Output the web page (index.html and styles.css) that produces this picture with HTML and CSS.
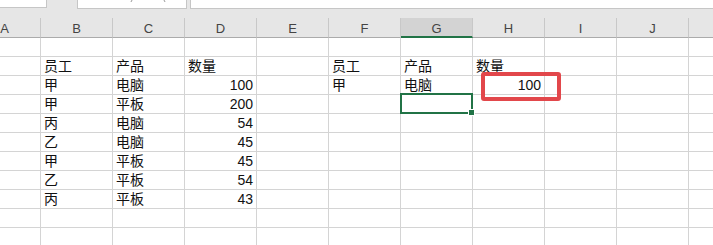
FILE: index.html
```html
<!DOCTYPE html>
<html lang="zh-CN">
<head>
    <meta charset="UTF-8">
    <title>工作表</title>
    <link rel="stylesheet" href="styles.css">
</head>
<body>
    <div class="toolbar">
        <div class="box name-box"></div>
        <div class="box btn-box"><span class="tick cancel"></span><span class="tick enter"></span></div>
        <div class="box formula-box"></div>
    </div>

    <div class="sheet">
        <div class="hd">A</div><div class="hd">B</div><div class="hd">C</div><div class="hd">D</div><div class="hd">E</div><div class="hd">F</div><div class="hd active">G</div><div class="hd">H</div><div class="hd">I</div><div class="hd">J</div><div class="hd"></div>

        <!-- row 1 -->
        <div class="c"></div><div class="c"></div><div class="c"></div><div class="c"></div><div class="c"></div><div class="c"></div><div class="c"></div><div class="c"></div><div class="c"></div><div class="c"></div><div class="c"></div>
        <!-- row 2 -->
        <div class="c"></div><div class="c">员工</div><div class="c">产品</div><div class="c">数量</div><div class="c"></div><div class="c">员工</div><div class="c">产品</div><div class="c">数量</div><div class="c"></div><div class="c"></div><div class="c"></div>
        <!-- row 3 -->
        <div class="c"></div><div class="c">甲</div><div class="c">电脑</div><div class="c n">100</div><div class="c"></div><div class="c">甲</div><div class="c">电脑</div><div class="c n">100<span class="mark"></span></div><div class="c"></div><div class="c"></div><div class="c"></div>
        <!-- row 4 -->
        <div class="c"></div><div class="c">甲</div><div class="c">平板</div><div class="c n">200</div><div class="c"></div><div class="c"></div><div class="c sel"></div><div class="c"></div><div class="c"></div><div class="c"></div><div class="c"></div>
        <!-- row 5 -->
        <div class="c"></div><div class="c">丙</div><div class="c">电脑</div><div class="c n">54</div><div class="c"></div><div class="c"></div><div class="c"></div><div class="c"></div><div class="c"></div><div class="c"></div><div class="c"></div>
        <!-- row 6 -->
        <div class="c"></div><div class="c">乙</div><div class="c">电脑</div><div class="c n">45</div><div class="c"></div><div class="c"></div><div class="c"></div><div class="c"></div><div class="c"></div><div class="c"></div><div class="c"></div>
        <!-- row 7 -->
        <div class="c"></div><div class="c">甲</div><div class="c">平板</div><div class="c n">45</div><div class="c"></div><div class="c"></div><div class="c"></div><div class="c"></div><div class="c"></div><div class="c"></div><div class="c"></div>
        <!-- row 8 -->
        <div class="c"></div><div class="c">乙</div><div class="c">平板</div><div class="c n">54</div><div class="c"></div><div class="c"></div><div class="c"></div><div class="c"></div><div class="c"></div><div class="c"></div><div class="c"></div>
        <!-- row 9 -->
        <div class="c"></div><div class="c">丙</div><div class="c">平板</div><div class="c n">43</div><div class="c"></div><div class="c"></div><div class="c"></div><div class="c"></div><div class="c"></div><div class="c"></div><div class="c"></div>
        <!-- row 10 -->
        <div class="c"></div><div class="c"></div><div class="c"></div><div class="c"></div><div class="c"></div><div class="c"></div><div class="c"></div><div class="c"></div><div class="c"></div><div class="c"></div><div class="c"></div>
        <!-- row 11 -->
        <div class="c"></div><div class="c"></div><div class="c"></div><div class="c"></div><div class="c"></div><div class="c"></div><div class="c"></div><div class="c"></div><div class="c"></div><div class="c"></div><div class="c"></div>
    </div>
</body>
</html>
```

FILE: styles.css
```css
body {
    margin: 0;
    background: #fff;
    overflow: hidden;
    font-family: "Liberation Sans", "Noto Sans CJK SC", sans-serif;
}

/* formula bar strip */
.toolbar {
    height: 18px;
    background: #e6e6e6;
    display: flex;
    align-items: flex-start;
}

.box {
    background: #fff;
    border-right: 1px solid #c6c6c6;
    border-bottom: 1px solid #c6c6c6;
    border-left: 1px solid #c6c6c6;
    box-sizing: border-box;
}

.name-box {
    width: 47px;
    height: 8px;
    border-left: none;
}

.btn-box {
    margin-left: 30px;
    width: 110px;
    height: 9px;
    position: relative;
    overflow: hidden;
}

/* bottom tips of the cancel / enter buttons */
.tick {
    position: absolute;
    top: 0;
    width: 1px;
    height: 2px;
    background: #999;
}

.cancel { left: 53px; transform: skewX(-30deg); }
.enter { left: 86px; transform: skewX(30deg); }

.formula-box {
    margin-left: 3px;
    flex: 1;
    height: 9px;
    border-right: none;
}

/* grid */
.sheet {
    margin-left: -31px;
    display: grid;
    grid-template-columns: repeat(11, 72px);
    grid-template-rows: 20px repeat(11, 19px);
}

.hd {
    background: #e6e6e6;
    border-right: 1px solid #c8c8c8;
    border-bottom: 1px solid #ababab;
    display: flex;
    align-items: flex-end;
    justify-content: center;
    padding-bottom: 2px;
    font-size: 13px;
    line-height: 13px;
    color: #444;
}

.hd.active {
    background: #d3d3d3;
    border-bottom: 2px solid #217346;
    padding-bottom: 1px;
}

.c {
    border-right: 1px solid #d4d4d4;
    border-bottom: 1px solid #d4d4d4;
    display: flex;
    align-items: flex-end;
    padding: 0 3px 2px;
    font-size: 14px;
    line-height: 14px;
    color: #111;
    position: relative;
    white-space: nowrap;
}

.c.n {
    justify-content: flex-end;
}

/* active cell with fill handle */
.sel::after {
    content: "";
    position: absolute;
    left: -1px;
    top: -2px;
    right: -1px;
    bottom: -1px;
    border: 2px solid #217346;
}

.sel::before {
    content: "";
    position: absolute;
    right: -3px;
    bottom: -3px;
    width: 5px;
    height: 5px;
    background: #217346;
    border: 1px solid #fff;
    z-index: 1;
}

/* red highlight frame */
.mark {
    position: absolute;
    left: 8px;
    top: -4px;
    width: 80px;
    height: 29px;
    box-sizing: border-box;
    border: 4px solid #e2474b;
    border-radius: 3px;
    z-index: 2;
}
```
